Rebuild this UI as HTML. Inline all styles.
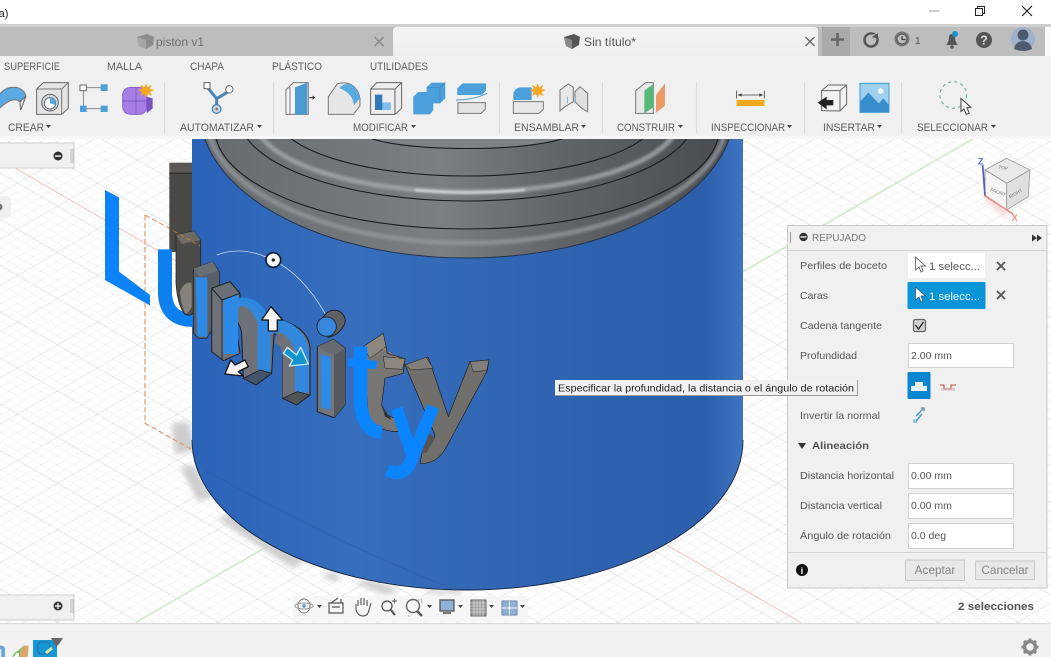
<!DOCTYPE html>
<html lang="es"><head><meta charset="utf-8"><title>Repujado</title>
<style>
html,body{margin:0;padding:0;background:#fff;overflow:hidden}
svg{display:block;filter:blur(.35px)}
text{font-family:"Liberation Sans",sans-serif}
</style></head><body>
<svg xmlns="http://www.w3.org/2000/svg" width="1051" height="657" viewBox="0 0 1051 657">
<defs>
<pattern id="grid" patternUnits="userSpaceOnUse" width="100" height="100" patternTransform="matrix(.4 -.231 .4 .231 937 160)">
<rect width="100" height="100" fill="#fff"/>
<path d="M20 0V100M40 0V100M60 0V100M80 0V100M0 20H100M0 40H100M0 60H100M0 80H100" stroke="#eeeeee" stroke-width="1.500" fill="none"/>
<path d="M0 0V100M0 0H100" stroke="#d2d2d2" stroke-width="2.400" fill="none"/>
</pattern>
<linearGradient id="cyl" x1="0" x2="1" y1="0" y2="0"><stop offset="0" stop-color="#2a63b8"/><stop offset=".3" stop-color="#376ebd"/><stop offset=".6" stop-color="#2f65b2"/><stop offset=".93" stop-color="#2c5fab"/><stop offset="1" stop-color="#3f74c2"/></linearGradient>
<linearGradient id="steel" gradientUnits="userSpaceOnUse" x1="197" x2="737" y1="0" y2="0"><stop offset="0" stop-color="#666a6e"/><stop offset=".45" stop-color="#7a7f83"/><stop offset=".66" stop-color="#62666a"/><stop offset="1" stop-color="#484a4d"/></linearGradient>
<linearGradient id="tab" x1="0" x2="0" y1="0" y2="1"><stop offset="0" stop-color="#f3f3f3"/><stop offset="1" stop-color="#efefef"/></linearGradient>
<filter id="sh" x="-40%" y="-40%" width="180%" height="180%"><feGaussianBlur stdDeviation="9"/></filter>
<filter id="sf" x="-20%" y="-200%" width="140%" height="500%"><feGaussianBlur stdDeviation="1"/></filter>
<filter id="sb" x="-10%" y="-10%" width="120%" height="120%"><feGaussianBlur stdDeviation="1.200"/></filter>
</defs>

<!-- viewport -->
<rect y="139" width="1051" height="486" fill="url(#grid)"/>
<path d="M972 139L136 622" stroke="#c6eeba" stroke-width="1"/>
<path d="M15 168L805 625" stroke="#f0bcb9" stroke-width=".9"/>

<!-- ground shadow -->
<g transform="translate(130 400) scale(.3333)" fill="#cdcdcd" filter="url(#sh)">
<path d="M125 70L175 65L195 150L135 165Z"/>
<path d="M150 200L190 195L250 290L205 305Z"/>
<path d="M260 355L300 345L525 480L490 505Z"/>
<path d="M575 525L610 515L635 535L610 545Z"/>
<path d="M670 548L720 540L810 570L770 585Z"/>
<path d="M880 568L1000 570L990 582L900 582Z"/>
</g>

<!-- dashed sketch plane behind -->
<g transform="translate(90 160) scale(.3333)" fill="none" stroke="#dc9b6e" stroke-width="3.500" stroke-dasharray="16 8">
<path d="M165 165V790L312 872"/><path d="M165 165L335 258"/>
</g>

<!-- rear letter piece -->
<g transform="translate(90 160) scale(.3333)">
<rect x="238" y="8" width="72" height="36" fill="#5a5754"/>
<rect x="238" y="36" width="70" height="240" fill="#4a4846"/>
<path d="M238 40H305" stroke="#222" stroke-width="2"/>
</g>

<!-- cylinder -->
<path d="M192 139V440A275.500 150 0 0 0 743 440V139Z" fill="url(#cyl)"/>
<path d="M192 440A275.500 150 0 0 0 743 440" fill="none" stroke="#15243c" stroke-width=".9"/>
<path d="M205 470Q330 540 455 590" fill="none" stroke="#2a5aa0" stroke-width="1" opacity=".5"/>

<!-- top rings -->
<ellipse cx="467" cy="111" rx="267" ry="147" fill="url(#steel)" stroke="#25324a" stroke-width="1"/>
<ellipse cx="467" cy="118" rx="260" ry="125" fill="none" stroke="#94999d" stroke-width="5" opacity=".75" filter="url(#sb)"/>
<ellipse cx="467" cy="129" rx="252" ry="100" fill="url(#steel)" stroke="#1b1d1f" stroke-width="1.100"/>
<ellipse cx="467" cy="116" rx="228" ry="85" fill="url(#steel)" stroke="#1b1d1f" stroke-width="1.100"/>
<ellipse cx="467" cy="119" rx="212" ry="73" fill="none" stroke="#a4a9ad" stroke-width="5" opacity=".8" filter="url(#sb)"/>
<ellipse cx="467" cy="116" rx="190" ry="60" fill="url(#steel)" stroke="#1b1d1f" stroke-width="1.100"/>
<ellipse cx="467" cy="131.500" rx="105" ry="17" fill="#7d8286" stroke="#1b1d1f" stroke-width="1.100"/>
<path d="M415 190Q470 195 525 190" stroke="#dfe2e4" stroke-width="2" fill="none" filter="url(#sf)"/>

<!-- gray extruded letters + blue -->
<g transform="translate(90 160) scale(.3333)" stroke-linejoin="round">
<path d="M45 90L87 112L87 335L180 405V436L45 360Z" fill="#0b82f6"/>
<path d="M225 268V400Q228 480 310 480" fill="none" stroke="#0d7fee" stroke-width="42"/>
<path d="M258 225L312 213L332 240V380L320 450Q300 475 282 460Q262 430 258 370Z" fill="#4c4b4a" stroke="#1c1c1c" stroke-width="2"/>
<path d="M258 225L312 213L332 240L275 252Z" fill="#6e6b67"/>
<path d="M270 395Q285 360 305 370L305 440Q295 465 285 460Q272 430 270 395Z" fill="#85827d"/>
<path d="M310 325L368 305L388 335V475L350 535L325 535L310 520Z" fill="#5a6068" stroke="#1c1c1c" stroke-width="2"/>
<path d="M310 325L368 305L385 332L330 350Z" fill="#6a6f75"/>
<path d="M316 352H352V530H322Z" fill="#2e8ae6"/>
<!-- y gray -->
<path d="M945 615L1015 592L1075 770L1140 605L1197 600L1192 632L1070 860Q1040 915 990 910L1000 860Q1030 850 1035 825Z" fill="#716f6c" stroke="#1c1c1c" stroke-width="2"/>
<path d="M945 615L1008 592L1030 625L965 630ZM1140 605L1197 600L1190 632L1150 635Z" fill="#827f7b" stroke="#1c1c1c" stroke-width="1.500"/>
<!-- t gray -->
<path d="M820 560L880 520L892 580L945 596L940 640L885 655L875 735Q885 775 925 775L925 815Q860 815 835 770Z" fill="#777674" stroke="#1c1c1c" stroke-width="2"/>
<path d="M820 560L880 520L888 560L840 595ZM880 590L945 596L938 628L885 625Z" fill="#8b8780" stroke="#1c1c1c" stroke-width="1.500"/>
<path d="M875 735L905 780L885 770Z" fill="#333"/>
<path d="M1010 815L1035 835L1010 878L990 880Z" fill="#555"/>
<path d="M250 212L330 258M860 550L945 610" stroke="#cc7d2c" stroke-width="2.500" stroke-dasharray="14 8" fill="none"/>
<!-- blue t -->
<path d="M812 560V715Q812 810 875 818" fill="none" stroke="#0b84ff" stroke-width="40"/>
<path d="M775 608L860 615" stroke="#0b84ff" stroke-width="25"/>
<!-- blue y -->
<path d="M920 745L968 890" stroke="#0b84ff" stroke-width="36" fill="none"/>
<path d="M1030 740L962 905Q940 955 892 930" fill="none" stroke="#0b84ff" stroke-width="38"/>
</g>

<!-- m, i, manipulators drawn from detail crop -->
<g transform="translate(200 250) scale(.3333)" stroke-linejoin="round">
<path d="M35 115L90 95L120 130V155C150 145 178 165 190 205C235 200 320 225 330 290V435L290 465L248 445V295Q245 265 222 250L215 370L168 405L130 385L125 250Q120 220 105 210L120 310L70 332L35 305Z" fill="#6e7278" stroke="#1e2024" stroke-width="3"/>
<path d="M92 135V312" stroke="#2d8ae6" stroke-width="44" fill="none"/>
<path d="M80 190C105 148 168 150 192 215V375" fill="none" stroke="#2d8ae6" stroke-width="38" opacity=".92"/>
<path d="M190 240C225 212 300 238 306 310V428" fill="none" stroke="#2d8ae6" stroke-width="42" opacity=".92"/>
<path d="M118 185C140 178 156 205 152 255L150 392" fill="none" stroke="#6e7278" stroke-width="30"/>
<path d="M228 262C250 268 266 290 266 325V446" fill="none" stroke="#6e7278" stroke-width="36"/>
<path d="M35 115L90 95L120 130L66 150Z" fill="#6b7077" stroke="#1e2024" stroke-width="3"/>
<path d="M66 150V330" stroke="#1e2024" stroke-width="2.500"/>
<path d="M130 385L168 405L215 370L180 360Z" fill="#44546a" stroke="#1e2024" stroke-width="2.500"/>
<path d="M248 445L290 465L330 435L292 425Z" fill="#4f5358" stroke="#1e2024" stroke-width="2.500"/>
<!-- i -->
<path d="M352 290L400 268L435 295V465L402 503L352 485Z" fill="#71767d" stroke="#1e2024" stroke-width="3"/>
<path d="M402 315L435 295V465L402 503Z" fill="#565a5f"/>
<path d="M352 290L400 268L435 295L400 315Z" fill="#666b72"/>
<path d="M362 312L392 322V480L364 472Z" fill="#2c8ae8"/>
<!-- dot -->
<path d="M375 195Q395 172 420 185Q445 205 430 230Q415 255 385 262L350 225Z" fill="#5f6165" stroke="#1e2024" stroke-width="3"/>
<ellipse cx="380" cy="230" rx="29" ry="29" fill="#3788de" stroke="#1e2024" stroke-width="2.500"/>
<!-- arc -->
<path d="M50 15Q130 -15 218 30Q305 70 375 190" fill="none" stroke="#c9d4e4" stroke-width="2.500"/>
<circle cx="220" cy="30" r="22" fill="#f6f6f6" stroke="#111c33" stroke-width="5"/>
<circle cx="220" cy="30" r="5" fill="#222"/>
<!-- arrows -->
<path d="M213 170L248 210H232V243H205V210H185Z" fill="#f4f4f4" stroke="#111" stroke-width="4"/>
<path d="M75 372L92 330L105 345L135 330L145 350L115 365L130 378Z" fill="#f4f4f4" stroke="#111" stroke-width="4"/>
<path d="M325 342L268 348L278 330L250 310L262 292L290 315L302 292Z" fill="#1295cf" stroke="#cfeaf5" stroke-width="4"/>
</g>

<!-- left panels -->
<rect x="-2" y="143" width="76" height="25" fill="#f0f0f0" stroke="#cfcfcf"/>
<circle cx="58" cy="156" r="4.500" fill="#333"/><rect x="55" y="155.300" width="6" height="1.500" fill="#eee"/>
<path d="M71 149V163M73 149V163" stroke="#aaa" stroke-width=".8"/>
<rect x="-6" y="196" width="17" height="22" rx="5" fill="#f0f0f0"/><circle cx="-1" cy="207" r="3.500" fill="#777"/>
<rect x="-2" y="595" width="76" height="25" fill="#f0f0f0" stroke="#cfcfcf"/>
<circle cx="58" cy="606" r="4.500" fill="#333"/><path d="M55 606H61M58 603V609" stroke="#eee" stroke-width="1.400"/>
<path d="M71 599V613M73 599V613" stroke="#aaa" stroke-width=".8"/>

<!-- view cube -->
<g transform="translate(740 135) scale(.3333)">
<path d="M735 180L800 240" stroke="#f2c6c2" stroke-width="14" filter="url(#sh)"/>
<path d="M735 105L800 70L870 105L800 145Z" fill="#e9e9e9" stroke="#9a9a9a" stroke-width="2.500"/>
<path d="M735 105L800 145V225L735 180Z" fill="#f4f4f4" stroke="#8f8f8f" stroke-width="2.500"/>
<path d="M800 145L870 105L865 185L800 225Z" fill="#dfdfdf" stroke="#9a9a9a" stroke-width="2.500"/>
<path d="M728 90L735 182" stroke="#5a5ab8" stroke-width="5"/>
<path d="M735 182L820 238" stroke="#e8908a" stroke-width="5"/>
<text x="714" y="88" font-size="27" fill="#5a6ac8" font-weight="bold">Z</text>
<text x="815" y="258" font-size="27" fill="#e88f88" font-weight="bold">X</text>
<text x="750" y="168" font-size="14" fill="#777" transform="rotate(20 750 168)">FRONT</text>
<text x="810" y="190" font-size="14" fill="#777" transform="rotate(-28 810 190)">RIGHT</text>
<text x="775" y="100" font-size="14" fill="#777" transform="rotate(12 775 100)">TOP</text>
</g>

<!-- nav bar -->
<rect x="293" y="596" width="235" height="26" fill="#f5f5f5" opacity=".9"/>
<g fill="none" stroke="#555" stroke-width="1">
<ellipse cx="304" cy="606" rx="6" ry="7" stroke="#777"/><ellipse cx="304" cy="606" rx="9" ry="3" stroke="#999"/><path d="M302 606H306M304 604V608" stroke="#2b7bc0"/>
<path d="M329 603H343V613H329ZM332 607H340M331 603L338 598M341 599L341 603" stroke="#555" stroke-width="1.200"/>
<path d="M356 604V610Q358 616 363 616Q368 616 369 610L371 603M358 606L358 600M361 605V598M364 605V598M367 606L367 600" stroke="#555" stroke-width="1.100"/>
<circle cx="387" cy="606" r="5" stroke-width="1.300"/><path d="M391 610L395 615" stroke-width="2.200"/><path d="M392 601H397M394.500 598.500V603.500" stroke-width=".9"/>
<circle cx="413" cy="606" r="6.500" stroke="#666" stroke-width="1.400"/><path d="M417 611L422 616" stroke-width="2.400"/><path d="M418 600H422V604M408 616H411" stroke="#999" stroke-dasharray="1.500 1"/>
<rect x="440" y="600" width="14" height="11" fill="#8fb0d8" stroke="#555" stroke-width="1.300"/><path d="M443 613H451" stroke="#777" stroke-width="2"/>
<rect x="471" y="600" width="15" height="16" fill="#999" stroke="#666"/><path d="M474 600V616M477 600V616M480 600V616M483 600V616M471 603H486M471 606H486M471 609H486M471 612H486" stroke="#eee" stroke-width=".6"/>
<rect x="502" y="601" width="15" height="14" fill="#8fb0d8" stroke="#6a84a6"/><path d="M509.500 601V615M502 608H517" stroke="#fff"/>
</g>
<path d="M317 605h5l-2.500 3zM427 605h5l-2.500 3zM458 605h5l-2.500 3zM489 605h5l-2.500 3zM520 605h5l-2.500 3z" fill="#444"/>

<!-- title bar -->
<rect width="1051" height="24" fill="#fff"/>
<text x="-5" y="17" font-size="11" fill="#222">(a)</text>
<path d="M929 11H939" stroke="#aaa" stroke-width="1.200"/>
<rect x="975.500" y="8.500" width="7" height="7" fill="none" stroke="#222"/><path d="M977.500 8.500V6.500H984.500V13.500H982.500" fill="none" stroke="#222"/>
<path d="M1022 6L1032 16M1032 6L1022 16" stroke="#111" stroke-width="1.100"/>

<!-- tab bar -->
<rect y="24" width="1051" height="3.500" fill="#cfcfcf"/>
<rect y="27" width="1045" height="29" fill="#bdbdbd"/>
<rect x="1045" y="27" width="6" height="29" fill="#fafafa"/>
<path d="M393 56V31Q393 27 397 27H814Q818 27 818 31V56Z" fill="url(#tab)"/>
<path d="M137 37L147 34L154 37L153 45L146 49L139 46Z" fill="#8c8c8c"/><path d="M137 37L146 40V49L139 46Z" fill="#a5a5a5"/>
<text x="156" y="46" font-size="12" fill="#6f6f6f" textLength="48" lengthAdjust="spacingAndGlyphs">piston v1</text>
<path d="M374.500 37L383.500 46M383.500 37L374.500 46" stroke="#8a8a8a" stroke-width="1.500"/>
<path d="M564 37L574 34L580 37L579 45L572 49L566 46Z" fill="#555"/><path d="M564 37L572 40V49L566 46Z" fill="#8a8a8a"/>
<text x="584" y="46" font-size="12" fill="#555" textLength="52" lengthAdjust="spacingAndGlyphs">Sin título*</text>
<path d="M805.500 37L814.500 46M814.500 37L805.500 46" stroke="#666" stroke-width="1.300"/>
<rect x="822" y="27" width="28" height="29" fill="#aaaaaa"/>
<path d="M837.500 33V46M831 39.500H844" stroke="#666" stroke-width="2.600"/>
<circle cx="871" cy="40" r="6.500" fill="none" stroke="#555" stroke-width="2.500"/><path d="M868 35L878 34L876 41Z" fill="#bdbdbd"/><path d="M872 37L878 33V39Z" fill="#555"/>
<circle cx="902" cy="39" r="7.500" fill="#777"/><circle cx="902" cy="39" r="5" fill="#bdbdbd" stroke="#555"/><path d="M902 36V39.500H905.500" stroke="#444" stroke-width="1.200" fill="none"/>
<text x="915" y="44" font-size="10" fill="#555">1</text>
<path d="M946 45Q949 42 949 37Q949 34 952 34Q955 34 955 37Q955 42 958 45Z" fill="#555"/><circle cx="952" cy="47" r="1.800" fill="#555"/><circle cx="955" cy="34" r="3" fill="#1a90d8"/>
<circle cx="984" cy="40" r="8" fill="#555"/>
<text x="984" y="44.500" font-size="12.500" font-weight="bold" fill="#ddd" text-anchor="middle">?</text>
<circle cx="1023" cy="39" r="12" fill="#9fb2cc"/><circle cx="1023" cy="35" r="5.500" fill="#4d5a70"/><path d="M1014 49Q1015 42 1023 41Q1031 42 1032 49Q1023 53 1014 49Z" fill="#4d5a70"/>

<!-- toolbar -->
<rect y="56" width="1051" height="83" fill="#f0f0f0"/>
<rect y="136" width="1051" height="3" fill="#f7f7f7"/>
<g font-size="11" fill="#5e5e5e">
<text x="4" y="70" textLength="56" lengthAdjust="spacingAndGlyphs">SUPERFICIE</text>
<text x="107" y="70" textLength="35" lengthAdjust="spacingAndGlyphs">MALLA</text>
<text x="190" y="70" textLength="34" lengthAdjust="spacingAndGlyphs">CHAPA</text>
<text x="272" y="70" textLength="50" lengthAdjust="spacingAndGlyphs">PLÁSTICO</text>
<text x="370" y="70" textLength="58" lengthAdjust="spacingAndGlyphs">UTILIDADES</text>
<text x="8" y="131" textLength="36" lengthAdjust="spacingAndGlyphs">CREAR</text>
<text x="180" y="131" textLength="74" lengthAdjust="spacingAndGlyphs">AUTOMATIZAR</text>
<text x="353" y="131" textLength="55" lengthAdjust="spacingAndGlyphs">MODIFICAR</text>
<text x="514" y="131" textLength="65" lengthAdjust="spacingAndGlyphs">ENSAMBLAR</text>
<text x="617" y="131" textLength="58" lengthAdjust="spacingAndGlyphs">CONSTRUIR</text>
<text x="711" y="131" textLength="74" lengthAdjust="spacingAndGlyphs">INSPECCIONAR</text>
<text x="823" y="131" textLength="52" lengthAdjust="spacingAndGlyphs">INSERTAR</text>
<text x="917" y="131" textLength="71" lengthAdjust="spacingAndGlyphs">SELECCIONAR</text>
</g>
<path d="M46 125h5l-2.500 3zM257 125h5l-2.500 3zM411 125h5l-2.500 3zM581 125h5l-2.500 3zM678 125h5l-2.500 3zM787 125h5l-2.500 3zM877 125h5l-2.500 3zM991 125h5l-2.500 3z" fill="#444"/>
<path d="M164.500 82V133M273.500 82V133M499.500 82V133M602.500 82V133M696.500 82V133M804.500 82V133M901.500 82V133" stroke="#dcdcdc" stroke-width="1.200"/>

<!-- toolbar icons (left) -->
<g transform="scale(.3333)" stroke-width="3">
<path d="M-8 300Q5 258 50 262Q72 268 78 288L62 330L60 306Q38 284 -8 332Z" fill="#5aa9e0" stroke="#777"/>
<path d="M60 306L78 288L62 330Z" fill="#eee" stroke="#666"/>
<path d="M110 267L130 248H205V325L185 343H110Z" fill="#e4e4e4" stroke="#666"/>
<path d="M110 267H185V343M185 267L205 248" fill="none" stroke="#777"/>
<circle cx="150" cy="308" r="25" fill="#cfd9e2" stroke="#666"/><circle cx="150" cy="310" r="17" fill="#fff" stroke="#666"/><path d="M150 293A17 17 0 0 1 166 315L150 310Z" fill="#5aa9e0"/>
<rect x="240" y="255" width="19" height="17" fill="#fff" stroke="#666"/>
<rect x="302" y="253" width="21" height="20" fill="#4b9fdb"/><rect x="240" y="317" width="20" height="19" fill="#4b9fdb"/><rect x="302" y="317" width="21" height="19" fill="#4b9fdb"/>
<path d="M260 263H302M250 272V317M260 326H302" stroke="#777" stroke-width="2.500"/>
<path d="M368 285Q370 262 395 262H440V320Q438 343 415 343H395Q370 343 368 320Z" fill="#a67ee6" stroke="#8a63cc"/>
<path d="M408 262V343M368 303H440" stroke="#6f4eb0" stroke-width="2"/>
<path d="M440 290L458 295V325L440 340Z" fill="#7a52c4"/>
<path d="M438 250L443 262L455 254L450 267L463 270L450 276L456 288L443 282L438 294L433 282L421 288L426 276L414 270L426 267L421 254L433 262Z" fill="#f5a623"/>
<path d="M622 262L650 296V322M690 272L650 296" stroke="#4a86b8" stroke-width="9" fill="none"/>
<rect x="612" y="248" width="18" height="18" fill="#fff" stroke="#666"/><circle cx="688" cy="268" r="11" fill="#fff" stroke="#666"/>
<circle cx="650" cy="327" r="13" fill="#cfd9e2" stroke="#4a86b8" stroke-width="4"/><circle cx="650" cy="327" r="4" fill="#777"/>
<path d="M858 343V270L880 248H925V343Z" fill="#f5f5f5" stroke="#777"/>
<path d="M885 262L922 248V343H885Z" fill="#4a9ad4"/><path d="M870 262V343" stroke="#777" fill="none"/>
<path d="M928 293H938" stroke="#222" stroke-width="3"/><path d="M938 287L946 293L938 299Z" fill="#222"/>
<path d="M985 343V290L1012 252Q1030 245 1050 252Q1075 265 1080 295V318L1060 343Z" fill="#e6e6e6" stroke="#777"/>
<path d="M1018 264Q1030 250 1050 252Q1075 265 1080 295L1062 315Q1058 280 1018 264Z" fill="#5aa9e0"/>
<path d="M1112 267L1130 248H1205V325L1185 343H1112Z" fill="#eee" stroke="#666"/><path d="M1112 267H1185V343M1185 267L1205 248" fill="none" stroke="#666"/>
<path d="M1125 284H1147V308H1172V330H1125Z" fill="#2f79b8"/><path d="M1147 308H1172V330H1147Z" fill="#7cc0ee"/>
<path d="M1240 290L1255 276H1300V330L1290 343H1240Z" fill="#4b9fdb"/><path d="M1280 262L1295 248H1336V295L1320 310H1280Z" fill="#4b9fdb"/><path d="M1280 262H1320V310M1320 262L1336 248" fill="none" stroke="#3b86bf" stroke-width="2"/>
<path d="M1372 265L1388 250H1458V272L1445 285H1372Z" fill="#4b9fdb"/>
<path d="M1368 300Q1420 300 1462 280" stroke="#4b9fdb" stroke-width="3" fill="none"/>
<path d="M1374 308H1456V328L1443 340H1374Z" fill="#e4e4e4" stroke="#777"/>
</g>
<!-- toolbar icons (right) -->
<g transform="translate(525 0) scale(.3333)" stroke-width="3">
<path d="M-35 280Q-30 262 -10 262H20V300H-35Z" fill="#4b9fdb"/>
<path d="M-35 305H55V328L42 340H-35Z" fill="#e8e8e8" stroke="#777"/>
<path d="M38 250L43 262L55 254L50 267L63 270L50 276L56 288L43 282L38 294L33 282L21 288L26 276L14 270L26 267L21 254L33 262Z" fill="#f5a623"/>
<path d="M105 333V270L130 252L145 262V305L120 320Z" fill="#e8e8e8" stroke="#777"/><path d="M150 305V275L165 260L188 280V335L170 325Z" fill="#e0e0e0" stroke="#777"/><path d="M128 290V310M150 290V310" stroke="#4b9fdb" stroke-width="2"/>
<path d="M332 340V272L362 248L385 248V340Z" fill="#e8e8e8" stroke="#777"/>
<path d="M358 272L385 252V322L358 340Z" fill="#55b97a"/>
<path d="M393 285L420 250V318L393 338Z" fill="#ec9a65"/>
<path d="M635 272V295M718 272V295M640 285H712" stroke="#444" stroke-width="2.500"/><path d="M638 285L650 280V290ZM715 285L703 280V290Z" fill="#444"/>
<rect x="635" y="300" width="83" height="18" fill="#f0a81c"/>
<path d="M890 332V272L910 255H965V312L945 333Z" fill="#f2f2f2" stroke="#666"/><path d="M890 272H945V333M945 272L965 255" fill="none" stroke="#666"/>
<path d="M878 308L905 290V300H925V316H905V328Z" fill="#222"/>
<rect x="1005" y="250" width="87" height="87" fill="#9fd0ee"/><path d="M1005 337V305L1030 278L1062 310L1075 295L1092 315V337Z" fill="#3a8dcc"/><circle cx="1067" cy="273" r="8" fill="#fff"/>
<rect x="1005" y="250" width="87" height="87" fill="none" stroke="#3a9ad8" stroke-width="3"/>
<circle cx="1285" cy="285" r="40" fill="none" stroke="#77b89a" stroke-width="3.500" stroke-dasharray="10 9"/>
<path d="M1308 295L1338 322L1326 323L1333 340L1324 343L1317 327L1308 335Z" fill="#f5f5f5" stroke="#444"/>
</g>

<!-- bottom bar -->
<rect y="624" width="1051" height="33" fill="#f2f2f2"/>
<rect y="623" width="1051" height="1.200" fill="#d9d9d9"/>
<g transform="translate(0 560) scale(.357)">
<rect x="-12" y="240" width="26" height="42" rx="10" fill="#6aa6d8"/><path d="M2 250V282" stroke="#fff" stroke-width="3"/>
<path d="M36 268L66 240H80L78 270L52 285H40Z" fill="#d8a86a"/><path d="M36 268L66 240L60 250L44 285Z" fill="#7bbf6a"/><ellipse cx="46" cy="270" rx="8" ry="13" fill="#fff" stroke="#7bbf6a" stroke-width="4" transform="rotate(30 46 270)"/>
</g>
<rect x="33" y="640" width="24" height="17" fill="#1597d8"/>
<path d="M51 638H63L59 644L56 647Z" fill="#666"/>
<rect x="38" y="642" width="12" height="12" rx="3" fill="none" stroke="#2d6e9e"/><path d="M46 653L52 648" stroke="#d8e8a0" stroke-width="3"/>
<g transform="translate(1030 647)" fill="#8a8a8a">
<circle r="5.500" fill="none" stroke="#8a8a8a" stroke-width="3.500"/>
<path d="M-1.500 -8.500H1.500V-5H-1.500ZM-1.500 5H1.500V8.500H-1.500ZM-8.500 -1.500H-5V1.500H-8.500ZM5 -1.500H8.500V1.500H5Z"/>
<path d="M-1.500 -8.500H1.500V-5H-1.500ZM-1.500 5H1.500V8.500H-1.500ZM-8.500 -1.500H-5V1.500H-8.500ZM5 -1.500H8.500V1.500H5Z" transform="rotate(45)"/>
</g>
<text x="958" y="610" font-size="11" font-weight="bold" fill="#555" textLength="76" lengthAdjust="spacingAndGlyphs">2 selecciones</text>

<!-- panel -->
<rect x="787.500" y="225.500" width="259.500" height="362.500" fill="#f0f0f0" stroke="#c8c8c8"/>
<path d="M787.500 250.500H1047M787.500 552.500H1047" stroke="#d4d4d4"/>
<path d="M790.500 232V243" stroke="#999"/>
<circle cx="803.500" cy="237" r="4.200" fill="#333"/><rect x="800.500" y="236.300" width="6" height="1.400" fill="#eee"/>
<text x="812" y="241" font-size="10.500" fill="#777" textLength="54" lengthAdjust="spacingAndGlyphs">REPUJADO</text>
<path d="M1032 234.500L1037 238L1032 241.500ZM1037 234.500L1042 238L1037 241.500Z" fill="#333"/>
<g font-size="10.300" fill="#555">
<text x="800" y="269" textLength="87" lengthAdjust="spacingAndGlyphs">Perfiles de boceto</text>
<text x="800" y="299" textLength="28" lengthAdjust="spacingAndGlyphs">Caras</text>
<text x="800" y="329" textLength="82" lengthAdjust="spacingAndGlyphs">Cadena tangente</text>
<text x="800" y="359" textLength="57" lengthAdjust="spacingAndGlyphs">Profundidad</text>
<text x="800" y="419" textLength="80" lengthAdjust="spacingAndGlyphs">Invertir la normal</text>
<text x="800" y="479" textLength="94" lengthAdjust="spacingAndGlyphs">Distancia horizontal</text>
<text x="800" y="509" textLength="82" lengthAdjust="spacingAndGlyphs">Distancia vertical</text>
<text x="800" y="539" textLength="91" lengthAdjust="spacingAndGlyphs">Ángulo de rotación</text>
</g>
<rect x="908" y="253" width="77" height="25" fill="#fff"/>
<path d="M915.500 257V270L919 267L921 272L923 271L921 266H925.500Z" fill="#fff" stroke="#666" stroke-width=".9"/>
<text x="929" y="270" font-size="10.800" fill="#555" textLength="51" lengthAdjust="spacingAndGlyphs">1 selecc...</text>
<path d="M997 262L1005 270M1005 262L997 270" stroke="#555" stroke-width="1.800"/>
<rect x="907.500" y="282" width="78" height="27" rx="1" fill="#0a95d9"/>
<path d="M915.500 287V300L919 297L921 302L923 301L921 296H925.500Z" fill="#fff" stroke="#2a5070" stroke-width=".7"/>
<text x="929" y="300" font-size="10.800" fill="#e8f6fd" textLength="51" lengthAdjust="spacingAndGlyphs">1 selecc...</text>
<path d="M997 291L1005 299M1005 291L997 299" stroke="#555" stroke-width="1.800"/>
<rect x="913.500" y="319.500" width="12" height="12" rx="2" fill="#d0d0d0" stroke="#666" stroke-width="1.300"/>
<path d="M915.500 325L918.500 329L923.500 322" fill="none" stroke="#222" stroke-width="1.300"/>
<g fill="#fff" stroke="#d2d2d2"><rect x="908.500" y="343.500" width="105" height="24"/><rect x="908.500" y="463.500" width="105" height="25"/><rect x="908.500" y="493.500" width="105" height="25"/><rect x="908.500" y="523.500" width="105" height="25"/></g>
<g font-size="10.500" fill="#555">
<text x="911" y="359">2.00 mm</text><text x="911" y="479">0.00 mm</text><text x="911" y="509">0.00 mm</text><text x="911" y="539">0.0 deg</text>
</g>
<rect x="907.500" y="372" width="23" height="27" rx="1" fill="#0a86cf"/>
<path d="M911 386H927V391H911ZM915 382H923V386H915Z" fill="#e8f4fa"/>
<path d="M940 385H944V389H951V385H956" fill="none" stroke="#cc4a4a" stroke-width="1.100"/><rect x="941" y="388" width="14" height="2.500" fill="#cfb4b4" opacity=".7"/>
<path d="M923 409L916 416M916 421L922 414" stroke="#3a9ad8" stroke-width="1.400"/><path d="M921 408H924V411" stroke="#666" fill="none"/><path d="M914 419V422H917" stroke="#3a9ad8" fill="none"/>
<path d="M798 443H806L802 449Z" fill="#333"/>
<text x="812" y="449" font-size="10.500" font-weight="bold" fill="#555" textLength="57" lengthAdjust="spacingAndGlyphs">Alineación</text>
<circle cx="802" cy="570" r="6" fill="#111"/><text x="802" y="574" font-size="9.500" font-weight="bold" fill="#fff" text-anchor="middle" font-family="Liberation Serif">i</text>
<rect x="905.500" y="560" width="59" height="20.500" fill="#e8e8e8" stroke="#c9c9c9"/>
<text x="935" y="574" font-size="11.800" fill="#858585" text-anchor="middle">Aceptar</text>
<rect x="975.500" y="561" width="59" height="18.500" fill="#e8e8e8" stroke="#c9c9c9"/>
<text x="1005" y="574" font-size="11.800" fill="#858585" text-anchor="middle">Cancelar</text>

<!-- tooltip -->
<rect x="555" y="380" width="302" height="15" fill="#f1f1f1"/>
<path d="M555 395.500H857.500V380" fill="none" stroke="#9a9a9a"/>
<text x="558" y="391.500" font-size="10.500" fill="#222" textLength="296" lengthAdjust="spacingAndGlyphs">Especificar la profundidad, la distancia o el ángulo de rotación</text>
</svg>
</body></html>
